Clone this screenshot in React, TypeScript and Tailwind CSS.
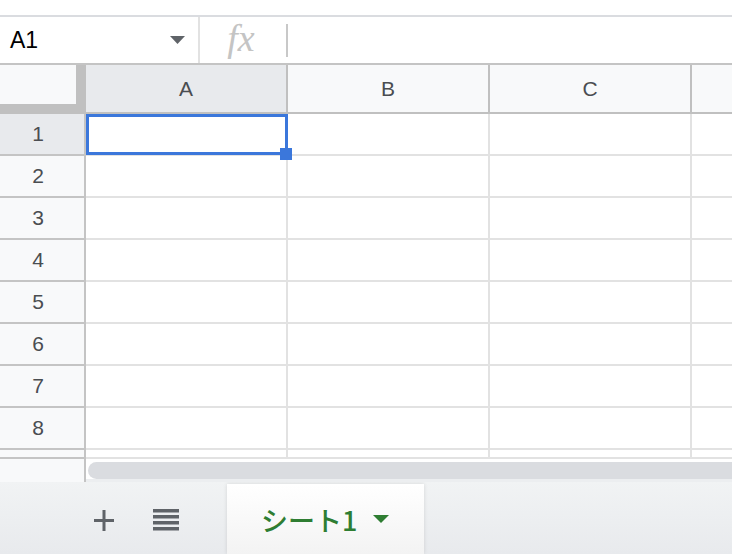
import React from "react";

const columns = ["A", "B", "C", "D"];
const rows = [1, 2, 3, 4, 5, 6, 7, 8];

function PlusIcon() {
  return (
    <svg width="20" height="21" viewBox="0 0 20 21">
      <rect x="8.5" y="0" width="3" height="21" fill="#5f6368" />
      <rect x="0" y="9" width="20" height="3" fill="#5f6368" />
    </svg>
  );
}

function ListIcon() {
  return (
    <svg width="26" height="23" viewBox="0 0 26 23">
      {[0, 6, 12, 18].map((y) => (
        <rect key={y} x="0" y={y} width="26" height="3.5" fill="#5f6368" />
      ))}
    </svg>
  );
}

export default function App() {
  return (
    <div className="w-[732px] h-[554px] overflow-hidden bg-white flex flex-col font-['Liberation_Sans',Arial,sans-serif]">
      {/* top strip */}
      <div className="h-[15px] shrink-0 bg-white" />

      {/* formula bar */}
      <div className="h-[50px] shrink-0 flex border-t-2 border-b-2 border-t-[#dadce0] border-b-[#c4c4c4]">
        <div className="w-[200px] flex items-center pl-[10px] pr-[13px] border-r-2 border-[#e2e2e2]">
          <span className="text-[23px] text-black leading-none">A1</span>
          <svg className="ml-auto" width="15" height="8" viewBox="0 0 15 8">
            <path d="M0 0 L15 0 L7.5 8 Z" fill="#5f6368" />
          </svg>
        </div>
        <div className="w-[86px] flex items-center justify-center">
          <span className="font-['Liberation_Serif',serif] italic text-[38px] text-[#c4c4c4] leading-none -mt-[4px] -ml-[4px]">
            fx
          </span>
        </div>
        <div className="flex items-center">
          <div className="w-[2px] h-[33px] bg-[#c8c8c8]" />
        </div>
      </div>

      {/* sheet grid */}
      <div className="relative flex flex-col shrink-0">
        {/* column headers */}
        <div className="flex h-[49px] border-b-2 border-[#c0c0c0]">
          <div className="w-[86px] h-[47px] shrink-0 bg-[#c0c0c0]">
            <div className="w-[76px] h-[39px] bg-[#f8f9fa]" />
          </div>
          {columns.map((c, i) => (
            <div
              key={c}
              className={`w-[202px] shrink-0 flex items-center justify-center border-r-2 border-[#c0c0c0] text-[21px] text-[#4a4d51] ${
                i === 0 ? "bg-[#e8eaed]" : "bg-[#f8f9fa]"
              }`}
            >
              {i < 3 ? c : ""}
            </div>
          ))}
        </div>

        {/* rows */}
        {rows.map((r) => (
          <div key={r} className="flex h-[42px]">
            <div
              className={`w-[86px] shrink-0 flex items-center justify-center pr-[8px] border-r-2 border-b-2 border-[#c4c4c4] text-[21px] text-[#4a4d51] ${
                r === 1 ? "bg-[#e8eaed]" : "bg-[#f8f9fa]"
              }`}
            >
              {r}
            </div>
            {columns.map((c) => (
              <div key={c} className="w-[202px] shrink-0 border-r-2 border-b-2 border-[#e2e2e2]" />
            ))}
          </div>
        ))}

        {/* partially visible row 9 */}
        <div className="flex h-[9px]">
          <div className="w-[86px] shrink-0 bg-[#f8f9fa] border-r-2 border-b-2 border-[#c4c4c4]" />
          {columns.map((c) => (
            <div key={c} className="w-[202px] shrink-0 border-r-2 border-b-2 border-[#e2e2e2]" />
          ))}
        </div>

        {/* horizontal scrollbar */}
        <div className="flex h-[23px]">
          <div className="w-[86px] shrink-0 bg-[#f8f9fa] border-r-2 border-[#c4c4c4]" />
          <div className="flex-1 bg-white pt-[3px] pl-[2px] border-b-[3px] border-[#eceef0]">
            <div className="h-[17px] w-[700px] rounded-full bg-[#dadce0]" />
          </div>
        </div>

        {/* active cell A1 */}
        <div className="absolute left-[86px] top-[49px] w-[202px] h-[41px] border-[3px] border-[#3b77db]" />
        <div className="absolute left-[280px] top-[83px] w-[12px] h-[12px] bg-[#3b77db]" />
      </div>

      {/* sheet tabs */}
      <div className="flex-1 flex bg-gradient-to-b from-[#f1f3f4] to-[#e8eaed]">
        <div className="flex items-center pl-[94px] pt-[4px]">
          <PlusIcon />
          <div className="ml-[39px]">
            <ListIcon />
          </div>
        </div>
        <div className="ml-[48px] mt-[2px] w-[197px] flex items-center pl-[34px] bg-gradient-to-b from-white to-[#f3f3f3] shadow-[0_0_4px_rgba(0,0,0,0.12)]">
          <span className="font-['Noto_Sans_CJK_JP',sans-serif] font-medium text-[27px] leading-none text-[#2e7d32]">
            シート1
          </span>
          <svg className="ml-[16px]" width="16" height="8" viewBox="0 0 16 8">
            <path d="M0 0 L16 0 L8 8 Z" fill="#2e7d32" />
          </svg>
        </div>
      </div>
    </div>
  );
}
